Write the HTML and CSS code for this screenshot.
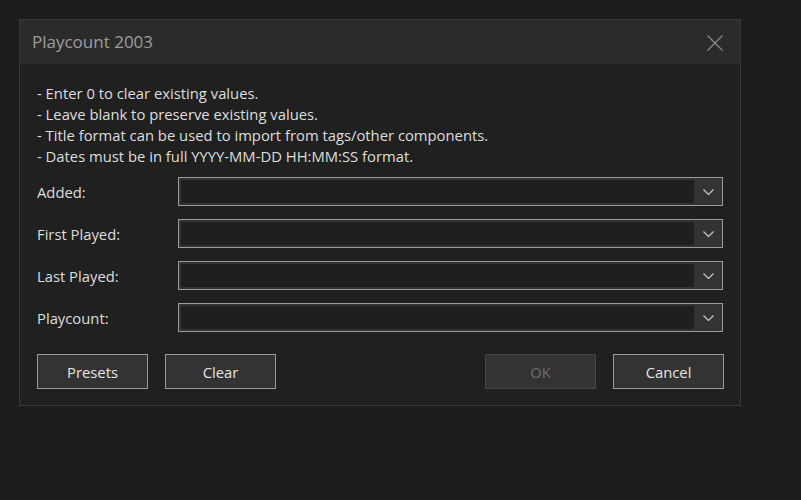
FILE: index.html
```html
<!DOCTYPE html>
<html>
<head>
<meta charset="utf-8">
<link rel="stylesheet" href="styles.css">
</head>
<body>
<div class="dialog">
  <div class="titlebar">
    <span class="title">Playcount 2003</span>
    <svg class="close" width="16" height="16" viewBox="0 0 16 16"><path d="M0.5 0.5 L15.5 15.5 M15.5 0.5 L0.5 15.5" stroke="#8c8c8c" stroke-width="1.2" fill="none"/></svg>
  </div>
  <div class="content">
    <div class="info">
      <div>- Enter 0 to clear existing values.</div>
      <div>- Leave blank to preserve existing values.</div>
      <div>- Title format can be used to import from tags/other components.</div>
      <div>- Dates must be in full YYYY-MM-DD HH:MM:SS format.</div>
    </div>
    <div class="form">
      <label class="lbl">Added:</label>
      <div class="combo"><div class="field"></div><div class="arrow"><svg width="11" height="6" viewBox="0 0 11 6"><path d="M0.5 0.5 L5.5 5.5 L10.5 0.5" stroke="#c8c8c8" stroke-width="1.2" fill="none"/></svg></div></div>
      <label class="lbl">First Played:</label>
      <div class="combo"><div class="field"></div><div class="arrow"><svg width="11" height="6" viewBox="0 0 11 6"><path d="M0.5 0.5 L5.5 5.5 L10.5 0.5" stroke="#c8c8c8" stroke-width="1.2" fill="none"/></svg></div></div>
      <label class="lbl">Last Played:</label>
      <div class="combo"><div class="field"></div><div class="arrow"><svg width="11" height="6" viewBox="0 0 11 6"><path d="M0.5 0.5 L5.5 5.5 L10.5 0.5" stroke="#c8c8c8" stroke-width="1.2" fill="none"/></svg></div></div>
      <label class="lbl">Playcount:</label>
      <div class="combo"><div class="field"></div><div class="arrow"><svg width="11" height="6" viewBox="0 0 11 6"><path d="M0.5 0.5 L5.5 5.5 L10.5 0.5" stroke="#c8c8c8" stroke-width="1.2" fill="none"/></svg></div></div>
    </div>
    <div class="buttons">
      <div class="group">
        <button class="btn">Presets</button>
        <button class="btn">Clear</button>
      </div>
      <div class="group">
        <button class="btn disabled">OK</button>
        <button class="btn">Cancel</button>
      </div>
    </div>
  </div>
</div>
</body>
</html>
```
FILE: styles.css
```css
html, body {
  margin: 0;
  padding: 0;
  background: #1c1c1c;
  width: 801px;
  height: 500px;
  overflow: hidden;
}
body {
  padding: 19px 0 0 19px;
  box-sizing: border-box;
  font-family: "Open Sans", Lato, sans-serif;
  font-size: 14.8px;
  color: #dedede;
}
.dialog {
  width: 722px;
  height: 387px;
  box-sizing: border-box;
  border: 1px solid #383838;
  background: #202020;
}
.titlebar {
  height: 44px;
  background: #2b2b2b;
  display: flex;
  align-items: center;
  justify-content: space-between;
  padding: 0 17px 0 12px;
}
.title {
  font-size: 17px;
  color: #9d9d9d;
  padding-bottom: 1px;
}
.close {
  display: block;
  margin-top: 1px;
}
.content {
  padding: 19px 16px 0 17px;
}
.info {
  line-height: 21px;
  padding-left: 0;
}
.form {
  display: grid;
  grid-template-columns: 141px 545px;
  row-gap: 13px;
  margin-top: 10px;
  align-items: center;
}
.lbl {
  line-height: 20px;
}
.combo {
  height: 29px;
  box-sizing: border-box;
  border: 1px solid #9a9a9a;
  background: #333333;
  display: flex;
  padding: 2px 0 2px 2px;
}
.field {
  flex: 1;
  background: #1f1f1f;
}
.arrow {
  width: 28px;
  display: flex;
  align-items: center;
  justify-content: center;
}
.arrow svg { display: block; margin-top: 1px; }
.buttons {
  display: flex;
  justify-content: space-between;
  margin-top: 22px;
}
.group {
  display: flex;
  gap: 17px;
}
.btn {
  width: 111px;
  height: 35px;
  box-sizing: border-box;
  border: 1px solid #9a9a9a;
  background: #333333;
  color: #e6e6e6;
  font-family: "Open Sans", Lato, sans-serif;
  font-size: 14.8px;
  padding: 0;
  margin: 0;
}
.btn.disabled {
  border-color: #464646;
  color: #6e6e6e;
}
```
